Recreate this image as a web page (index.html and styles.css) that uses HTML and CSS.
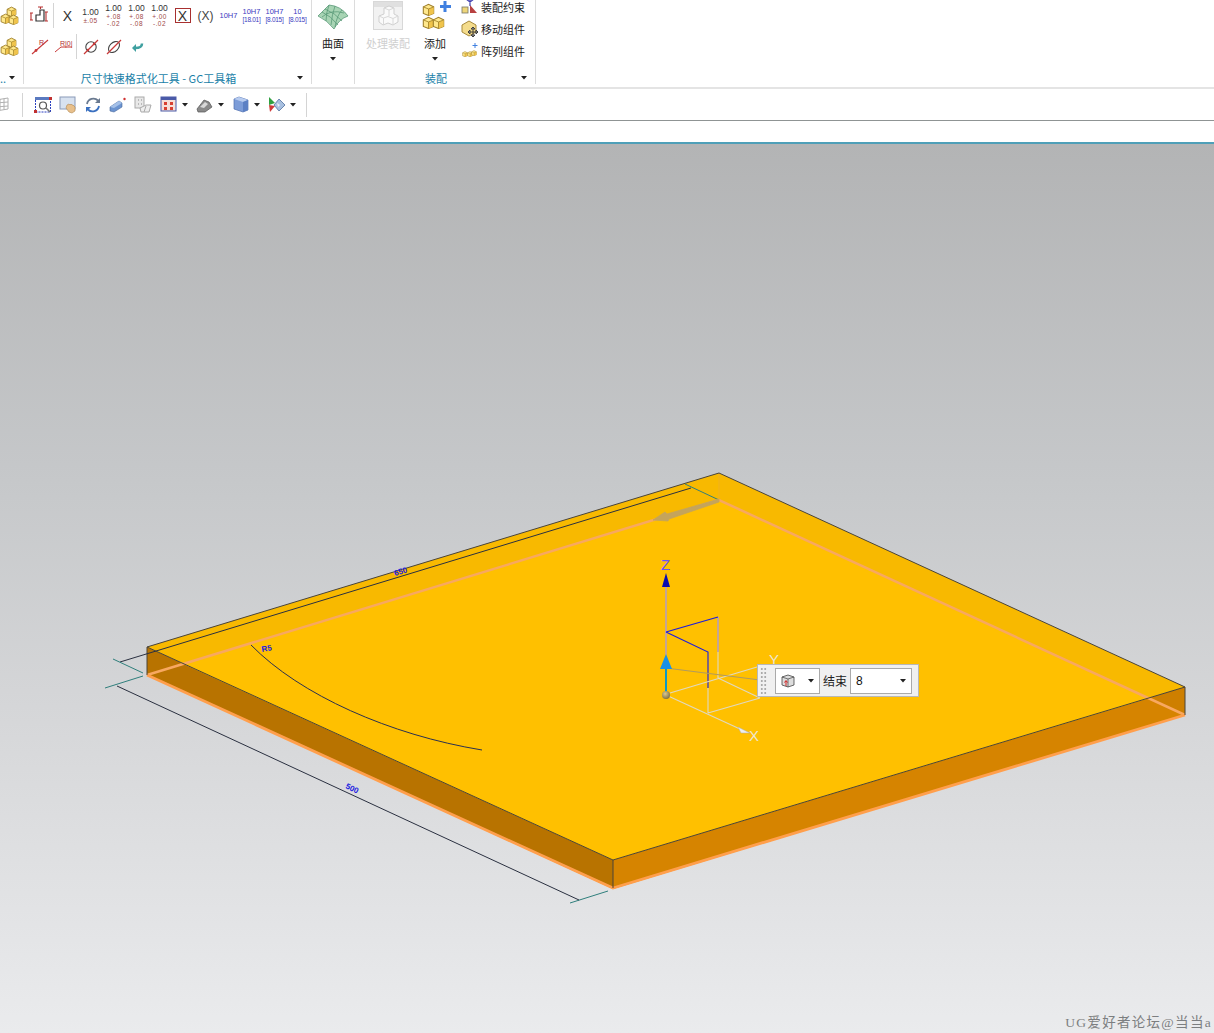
FILE: index.html
```html
<!DOCTYPE html>
<html lang="zh-CN">
<head>
<meta charset="utf-8">
<title>NX 装配</title>
<link rel="stylesheet" href="styles.css">
</head>
<body>
<svg class="defs" width="0" height="0">
  <defs>
    <radialGradient id="ball" cx=".4" cy=".35" r=".7"><stop offset="0" stop-color="#d8c890"/><stop offset="1" stop-color="#7c6c40"/></radialGradient>
  </defs>
  <symbol id="cube" viewBox="0 0 10 10">
    <path d="M1 3 5 1 9 3 9 8 5 9.6 1 8Z" fill="#ffe88c" stroke="#9c7c28" stroke-width=".8"/>
    <path d="M5 4.6 9 3 9 8 5 9.6Z" fill="#f0c44c"/>
    <path d="M1 3 5 4.6 9 3M5 4.6V9.6" fill="none" stroke="#a8882c" stroke-width=".7"/>
  </symbol>
  <symbol id="gold" viewBox="0 0 20 20">
    <use href="#cube" x="6" y="0" width="11" height="11"/>
    <use href="#cube" x="0" y="7" width="11" height="11"/>
    <use href="#cube" x="8" y="8" width="11" height="11"/>
  </symbol>
  <symbol id="caret" viewBox="0 0 6 4"><path d="M0 0H6L3 3.5Z" fill="#222"/></symbol>
</svg>

<div class="app">
  <header class="ribbon">
    <section class="group g-a">
      <div class="rows">
        <div class="row"><svg class="i20" viewBox="0 0 20 20"><use href="#gold"/></svg></div>
        <div class="row"><svg class="i20" viewBox="0 0 20 20"><use href="#gold"/></svg></div>
      </div>
      <div class="foot"><span class="more">..</span><svg class="caret"><use href="#caret"/></svg></div>
    </section>

    <section class="group g-b">
      <div class="rows">
        <div class="row">
          <span class="cell"><svg class="i20" viewBox="0 0 20 20" fill="none"><path d="M6 15V9H10V4H14V15Z" stroke="#333" stroke-width="1.2"/><path d="M8 1H13M10.500 1V3M1 7V14M0 7H3M0 14H3M16 6V15M15 6H18M15 15H18" stroke="#b83030" stroke-width="1.1"/></svg></span>
          <span class="vsep"></span>
          <span class="cell glyph">X</span>
          <span class="cell tol"><b>1.00</b><i>±.05</i></span>
          <span class="cell tol"><b>1.00</b><i>+.08<br>-.02</i></span>
          <span class="cell tol"><b>1.00</b><i>+.08<br>-.08</i></span>
          <span class="cell tol"><b>1.00</b><i>+.00<br>-.02</i></span>
          <span class="cell"><span class="boxed">X</span></span>
          <span class="cell"><span class="paren">(X)</span></span>
          <span class="cell fit"><b>10H7</b></span>
          <span class="cell fit"><b>10H7</b><b>[18.01]</b></span>
          <span class="cell fit"><b>10H7</b><b>[8.015]</b></span>
          <span class="cell fit"><b>10</b><b>[8.015]</b></span>
        </div>
        <div class="row">
          <span class="cell"><svg class="i20" viewBox="0 0 20 20" fill="none"><path d="M2 17 18 3" stroke="#c83838" stroke-width="1.1"/><circle cx="6" cy="13.500" r="1.400" fill="#c83838"/><text x="9" y="8" class="mini">R</text></svg></span>
          <span class="cell"><svg class="i20" viewBox="0 0 20 20" fill="none"><path d="M2 15 8 10H19" stroke="#c83838" stroke-width="1"/><text x="7" y="8.500" class="mini">R|0|</text></svg></span>
          <span class="vsep"></span>
          <span class="cell"><svg class="i20" viewBox="0 0 20 20" fill="none"><circle cx="10" cy="10" r="5.200" stroke="#444" stroke-width="1.100"/><path d="M3 17 17 3" stroke="#c83838" stroke-width="1.200"/><circle cx="7" cy="13" r="1.200" fill="#c83838"/><circle cx="13" cy="7" r="1.200" fill="#c83838"/></svg></span>
          <span class="cell"><svg class="i20" viewBox="0 0 20 20" fill="none"><ellipse cx="10" cy="10" rx="6.500" ry="4.300" transform="rotate(-45 10 10)" stroke="#444" stroke-width="1.100"/><path d="M3 17 17 3" stroke="#c83838" stroke-width="1.200"/></svg></span>
          <span class="cell"><svg class="i20" viewBox="0 0 20 20" fill="none"><path d="M15 6.500C15 10 13 11 8 11" stroke="#3fa0a0" stroke-width="2.600"/><path d="M9 7 5 11 9 15Z" fill="#3fa0a0"/></svg></span>
        </div>
      </div>
      <div class="foot teal"><span class="foot-label">尺寸快速格式化工具 - GC工具箱</span><svg class="caret"><use href="#caret"/></svg></div>
    </section>

    <section class="group g-c">
      <div class="stack">
        <svg class="i32" viewBox="0 0 32 30" fill="none"><path d="M1 15 12 4Q24 5 31 15 22 18 17 28 10 19 1 15Z" fill="#a8d4b4" stroke="#5a9a78" stroke-width=".8"/><path d="M5 11Q14 15 21 24M8 8Q18 12 25 20M12 4Q9 12 9 20M18 5Q15 13 14 24M25 9Q20 14 18 26M5 16Q14 8 27 12" stroke="#5a9a78" stroke-width=".8"/></svg>
        <span class="stack-label">曲面</span>
        <svg class="caret"><use href="#caret"/></svg>
      </div>
    </section>

    <section class="group g-d">
      <div class="asm">
        <div class="stack dim">
          <svg class="i32" viewBox="0 0 30 30"><rect x=".5" y=".5" width="29" height="28" fill="#f2f2f2" stroke="#d8d8d8"/><rect x="1" y="1" width="28" height="5" fill="#e0e0e0"/><path d="M11 7 16 5 21 7V13L25 15V21L20 24 15 22 10 24 6 21V15L11 13Z" fill="#fafafa" stroke="#cfcfcf"/><path d="M11 7 16 9 21 7M16 9V15M6 15 10.500 17 15 15.500M10.500 17V24M15 15.500 20 17.500 25 15M20 17.500V24" fill="none" stroke="#d8d8d8"/></svg>
          <span class="stack-label">处理装配</span>
        </div>
        <div class="stack add">
          <svg class="i32" viewBox="0 0 32 30"><use href="#cube" x="1" y="2" width="13" height="13"/><use href="#cube" x="1" y="15" width="13" height="13"/><use href="#cube" x="11" y="15" width="13" height="13"/><path d="M24 0V11M19 5.500H30" stroke="#4080e0" stroke-width="3"/></svg>
          <span class="stack-label">添加</span>
          <svg class="caret"><use href="#caret"/></svg>
        </div>
        <ul class="list">
          <li><svg class="i18" viewBox="0 0 18 18"><rect x="1" y="9" width="6" height="6" fill="#eed67a" stroke="#776" stroke-width=".8"/><path d="M9 15V7L16 15Z" fill="#b84040"/><path d="M9 0V8M5 1 9 4 13 1" fill="none" stroke="#4040b0" stroke-width="1.200"/></svg>装配约束</li>
          <li><svg class="i18" viewBox="0 0 18 18"><path d="M1 5 8 1 15 5V12L8 16 1 12Z" fill="#f4dc8c" stroke="#a88a3c"/><path d="M12 7V17M7 12H17M12 7 10 9H14ZM12 17 10 15H14ZM7 12 9 10V14ZM17 12 15 10V14Z" fill="#fff" stroke="#333" stroke-width=".9"/></svg>移动组件</li>
          <li><svg class="i18" viewBox="0 0 18 18"><use href="#cube" x="1" y="9" width="6" height="6"/><use href="#cube" x="6" y="9" width="6" height="6"/><use href="#cube" x="10" y="8" width="6" height="6"/><path d="M14 1V6M11.500 3.500H16.500" stroke="#4080e0"/></svg>阵列组件</li>
        </ul>
      </div>
      <div class="foot teal"><span class="foot-label">装配</span><svg class="caret"><use href="#caret"/></svg></div>
    </section>
  </header>

  <nav class="toolbar">
    <span class="tb t-first"><svg class="i18" viewBox="0 0 18 18" fill="none"><path d="M-4 4 8 2V13L-4 15ZM0 3V14M4 2.500V13.500M-4 7 8 6M-4 11 8 10" stroke="#b0b0b0"/></svg></span>
    <span class="vsep tall"></span>
    <span class="tb"><svg class="i18" viewBox="0 0 18 18" fill="none"><rect x="1.500" y="2" width="15" height="14" stroke="#2a3fc0" stroke-dasharray="2 1"/><rect x="1" y="1" width="16" height="3" fill="#5a7ac0"/><circle cx="9" cy="9.500" r="3.500" stroke="#555" stroke-width="1.200"/><path d="M12 12 16 16" stroke="#777" stroke-width="1.600"/><rect x="0" y="14" width="3" height="3" fill="#c03030"/><rect x="15" y="1" width="3" height="3" fill="#c03030"/></svg></span>
    <span class="tb"><svg class="i18" viewBox="0 0 18 18"><rect x="1" y="1" width="15" height="12" fill="#d8e2f0" stroke="#8a9ab8"/><path d="M8 9 10 8 11 9 12 8 13 9 14 9 16 11V15L13 17 10 16 7 12Z" fill="#e8c08c" stroke="#b08850" stroke-width=".6"/></svg></span>
    <span class="tb"><svg class="i18" viewBox="0 0 18 18" fill="none"><path d="M3 8A6.500 6.500 0 0 1 14 4.500" stroke="#6a7a90" stroke-width="1.800"/><path d="M15 10A6.500 6.500 0 0 1 4 13.500" stroke="#3a70c0" stroke-width="1.800"/><path d="M16 2V7H11Z" fill="#6a7a90"/><path d="M2 16V11H7Z" fill="#3a70c0"/></svg></span>
    <span class="tb"><svg class="i18" viewBox="0 0 18 18"><path d="M1 11 10 5 13 7 13 11 5 16 1 15Z" fill="#6c94d0" stroke="#48689c" stroke-width=".6"/><path d="M10 5 13 7 5 12 1 11Z" fill="#a4c0e8"/><circle cx="15.500" cy="3" r="1.200" fill="#d03030"/></svg></span>
    <span class="tb"><svg class="i18" viewBox="0 0 18 18" fill="none"><rect x="1" y="1" width="9" height="11" fill="#e8e8e8" stroke="#aaa"/><path d="M4 4H5M7 4H8M4 8H5M7 8H8" stroke="#888"/><path d="M6 12 12 9H17L15 16H7Z" fill="#eee" stroke="#aaa"/><path d="M10 16 12 10" stroke="#aaa"/></svg></span>
    <span class="tb tb-mid"><svg class="i18" viewBox="0 0 18 18"><rect x="1" y="1" width="15" height="14" fill="#f6e0d8" stroke="#4a5aa8"/><rect x="1" y="1" width="15" height="3" fill="#4a5aa8"/><path d="M4 6H7V9H4ZM10 6H13V9H10ZM4 11H7V14H4ZM10 11H13V14H10Z" fill="#d84030"/></svg></span>
    <svg class="caret c-tb"><use href="#caret"/></svg>
    <span class="tb"><svg class="i18" viewBox="0 0 18 18"><path d="M1 13 8 4 13 6 16 11 9 16 2 16Z" fill="#8a8a8a" stroke="#555" stroke-width=".7"/><path d="M4 11 9 6 12 8 8 12Z" fill="#d8d8d8"/></svg></span>
    <svg class="caret c-tb"><use href="#caret"/></svg>
    <span class="tb"><svg class="i18" viewBox="0 0 18 18"><path d="M2 3 7 1 16 4V14L11 16 2 13Z" fill="#7c9cd8" stroke="#5070b0" stroke-width=".7"/><path d="M2 3 11 6 16 4 7 1Z" fill="#b8ccf0"/><path d="M11 6V16L16 14V4Z" fill="#5c80c4"/></svg></span>
    <svg class="caret c-tb"><use href="#caret"/></svg>
    <span class="tb"><svg class="i18" viewBox="0 0 18 18"><path d="M1 1 7 7 1 9Z" fill="#30a040"/><path d="M1 9 7 10 2 16Z" fill="#d03838"/><path d="M11 3 17 9 11 15 6 9Z" fill="#a8c0e0" stroke="#5070a0" stroke-width=".8"/><path d="M9 7 12 9 10 11Z" fill="#e8f0f8"/></svg></span>
    <svg class="caret c-tb"><use href="#caret"/></svg>
    <span class="vsep tall end"></span>
  </nav>

  <div class="strip"></div>

  <main class="viewport">
    <svg class="scene" viewBox="0 144 1214 889" width="1214" height="889">
      <polygon points="613,860 1185,687 1185,715 613,889" fill="#d68400"/>
      <polygon points="147,647 613,860 613,889 147,675" fill="#b87300"/>
      <polygon points="147,647 719,473 1185,687 613,860" fill="#f8b900"/>
      <polygon points="183,664 719,500 1150,698 613,860" fill="#ffc000"/>
      <polygon points="1150,698 1185,687 1185,715" fill="#ce7f00"/>
      <path d="M719 473V500" stroke="#f0b020"/>
      <path d="M147 675 719 500 1185 715" fill="none" stroke="#f8a860" stroke-width="2.500"/>
      <path d="M147 675 613 888 1185 715" fill="none" stroke="#ff9f4c" stroke-width="2.800"/>
      <path d="M147 647 719 473 1185 687 613 860ZM613 860V888M147 647V675M1185 687V715" fill="none" stroke="#4a4438" stroke-width="1"/>

      <path d="M120 662 691 488" stroke="#2a3040" stroke-width="1"/>
      <path d="M113 659 143 673M685 484 719 500M105 688 143 676M570 903 608 891" stroke="#2f7f7c" stroke-width="1"/>
      <path d="M117 686 579 900" stroke="#2a3040" stroke-width="1"/>
      <path d="M653 520 665 512 667 514 719 499 719 502 669 519 668 521Z" fill="#c4a45c" stroke="#c4a45c" stroke-width=".8"/>
      <path d="M251 645C300 695 390 735 482 750" fill="none" stroke="#2a3050" stroke-width="1"/>
      <text class="dim-text" transform="translate(395 576) rotate(-17)">650</text>
      <text class="dim-text" transform="translate(345 788) rotate(25)">500</text>
      <text class="dim-text" transform="translate(262 652) rotate(-10)">R5</text>

      <path d="M666 587V655M718 617V652" stroke="#b49cc4" stroke-width="1.500"/>
      <path d="M666 632 718 617M666 632 708 652 708 688" fill="none" stroke="#1a1ae0" stroke-width="1.100"/>
      <path d="M718 652V678M708 688V713M670 693 757 667M718 678 760 698M708 713 760 698M666 695 740 729" fill="none" stroke="#e0d8c0" stroke-width="1.100"/>
      <path d="M666 668 760 680" stroke="#b09a60" stroke-width="1"/>
      <path d="M666 668V692" stroke="#0c98c8" stroke-width="2"/>
      <path d="M666 654 672 669H660Z" fill="#1a90e8"/>
      <path d="M666 573 670 587H662Z" fill="#0a0ab0"/>
      <path d="M738 727 750 733 741 733Z" fill="#eee" stroke="#aaa" stroke-width=".5"/>
      <circle cx="666" cy="695" r="4" fill="url(#ball)"/>
      <text class="axis z" x="661" y="570">Z</text>
      <text class="axis y" x="769" y="665">Y</text>
      <text class="axis x" x="749" y="741">X</text>
    </svg>

    <div class="popup">
      <span class="grip"></span>
      <div class="select small"><svg class="i14" viewBox="0 0 14 14"><path d="M1 3 7 1 13 3V11L7 13 1 11Z" fill="#ddd" stroke="#444" stroke-width=".8"/><path d="M1 3 7 5 13 3M7 5V13" fill="none" stroke="#444" stroke-width=".7"/><path d="M5 12V7M3.500 8.500 5 6.500 6.500 8.500" fill="none" stroke="#d02020"/></svg><svg class="caret"><use href="#caret"/></svg></div>
      <span class="popup-label">结束</span>
      <div class="select wide"><span class="value">8</span><svg class="caret"><use href="#caret"/></svg></div>
    </div>

    <div class="watermark">UG爱好者论坛@当当a</div>
  </main>
</div>
</body>
</html>
```
FILE: styles.css
```css
* { box-sizing: border-box; }
html, body { margin: 0; height: 100%; overflow: hidden; background: #fff; }
body { font-family: "Noto Sans CJK SC", "Liberation Sans", sans-serif; font-size: 11px; color: #222; }
svg { display: block; flex: none; }
.defs { position: absolute; }
.app { display: flex; flex-direction: column; height: 1033px; }

/* ribbon */
.ribbon { display: flex; height: 89px; flex: none; border-bottom: 2px solid #e4e4e4; overflow: hidden; }
.group { display: flex; flex-direction: column; height: 84px; border-right: 1px solid #dcdcdc; position: relative; flex: none; }
.g-a { width: 24px; }
.g-b { width: 288px; padding-left: 4px; }
.g-c { width: 43px; }
.g-d { width: 181px; }
.rows { display: flex; flex-direction: column; height: 71px; }
.row { display: flex; align-items: center; height: 31px; }
.cell { width: 23px; height: 24px; display: flex; flex-direction: column; align-items: center; justify-content: center; flex: none; }
.vsep { width: 1px; height: 25px; background: #d4d4d4; margin: 0 2px 0 2px; flex: none; }
.i14 { width: 14px; height: 14px; }
.i18 { width: 18px; height: 18px; }
.i20 { width: 20px; height: 20px; }
.i32 { width: 32px; height: 30px; }
.caret { width: 6px; height: 4px; }
.mini { font: 7px "Liberation Sans", sans-serif; fill: #b03030; }

.glyph { font: 14px "Liberation Sans", sans-serif; color: #333; }
.tol { font-family: "Liberation Sans", sans-serif; }
.tol b { font-size: 8.500px; line-height: 9px; font-weight: 400; color: #333; }
.tol i { font-style: normal; font-size: 6.500px; line-height: 7px; letter-spacing: .4px; color: #a04848; text-align: center; }
.boxed { width: 16px; height: 15px; display: flex; align-items: center; justify-content: center; border: 1px solid #a83030; font: 14px "Liberation Sans", sans-serif; color: #333; }
.paren { font: 12px "Liberation Sans", sans-serif; color: #444; }
.fit { font-family: "Liberation Sans", sans-serif; }
.fit b { font-size: 7.500px; line-height: 8px; font-weight: 400; color: #3a3ac0; white-space: nowrap; }
.fit b + b { font-size: 6.500px; letter-spacing: -.3px; }

.foot { display: flex; align-items: center; justify-content: space-between; height: 14px; margin-top: auto; padding-top: 2px; }
.g-a .foot { padding-right: 8px; font-size: 11px; }
.more { color: #1a7fa8; line-height: 14px; }
.teal { color: #1a7fa8; position: relative; justify-content: center; }
.foot-label { line-height: 14px; white-space: nowrap; }
.g-b .foot .foot-label { margin-left: -22px; }
.g-d .foot .foot-label { margin-left: -18px; }
.teal .caret { position: absolute; right: 8px; top: 6px; }

.stack { display: flex; flex-direction: column; align-items: center; }
.g-c .stack { padding-top: 1px; }
.stack-label { font-size: 11px; line-height: 14px; margin: 5px 0 7px; white-space: nowrap; }
.asm { display: flex; height: 71px; }
.dim { width: 66px; padding-top: 1px; color: #cfcfcf; }
.add { width: 28px; padding-top: 1px; margin-right: 12px; }
.add .i32 { margin-left: 4px; }
.list { list-style: none; margin: -4px 0 0; padding: 0; display: flex; flex-direction: column; }
.list li { display: flex; align-items: center; gap: 2px; height: 22px; white-space: nowrap; line-height: 22px; }

/* toolbar */
.toolbar { display: flex; align-items: center; height: 32px; flex: none; border-bottom: 1px solid #8f9494; }
.tb { width: 25px; height: 22px; display: flex; align-items: center; justify-content: center; flex: none; }
.t-first { width: 22px; justify-content: flex-start; }
.toolbar .vsep.tall { margin: 0 7px 0 0; height: 24px; }
.toolbar .vsep.end { margin: 0 0 0 6px; }
.tb-mid { margin-left: 1px; }
.c-tb { margin: 0 4px 0 1px; }

.strip { height: 23px; flex: none; border-bottom: 2px solid #4e9fb8; }

/* viewport */
.viewport { flex: 1; position: relative; overflow: hidden; background: linear-gradient(#b3b4b5, #c6c8ca 38%, #d6d7d9 65%, #eaebed); }
.scene { width: 1214px; height: 889px; }
.dim-text { font: 700 8px "Liberation Sans", sans-serif; fill: #2020e0; }
.axis { font: 15px "Liberation Sans", sans-serif; }
.axis.z { fill: #6a50f0; }
.axis.y, .axis.x { fill: #eee6d0; }

.popup { position: absolute; left: 757px; top: 520px; width: 162px; height: 33px; display: flex; align-items: center; background: #f0f0f0; border: 1px solid #b8b8b8; padding-left: 2px; }
.grip { width: 7px; height: 28px; margin-right: 8px; background-image: radial-gradient(#aaa 1px, transparent 1.100px); background-size: 3.500px 4px; }
.select { display: flex; align-items: center; justify-content: space-between; height: 26px; background: #fff; border: 1px solid #aaa; padding: 0 5px; }
.select.small { width: 45px; }
.select.wide { width: 62px; }
.popup-label { width: 30px; text-align: center; font-size: 12px; }
.value { font: 12px "Liberation Sans", sans-serif; color: #111; }

.watermark { position: absolute; right: 2px; bottom: 1px; font-family: "Liberation Serif", "Noto Sans CJK SC", serif; font-size: 13.500px; line-height: 18px; letter-spacing: 1.300px; color: #7c7e80; white-space: nowrap; }
```
